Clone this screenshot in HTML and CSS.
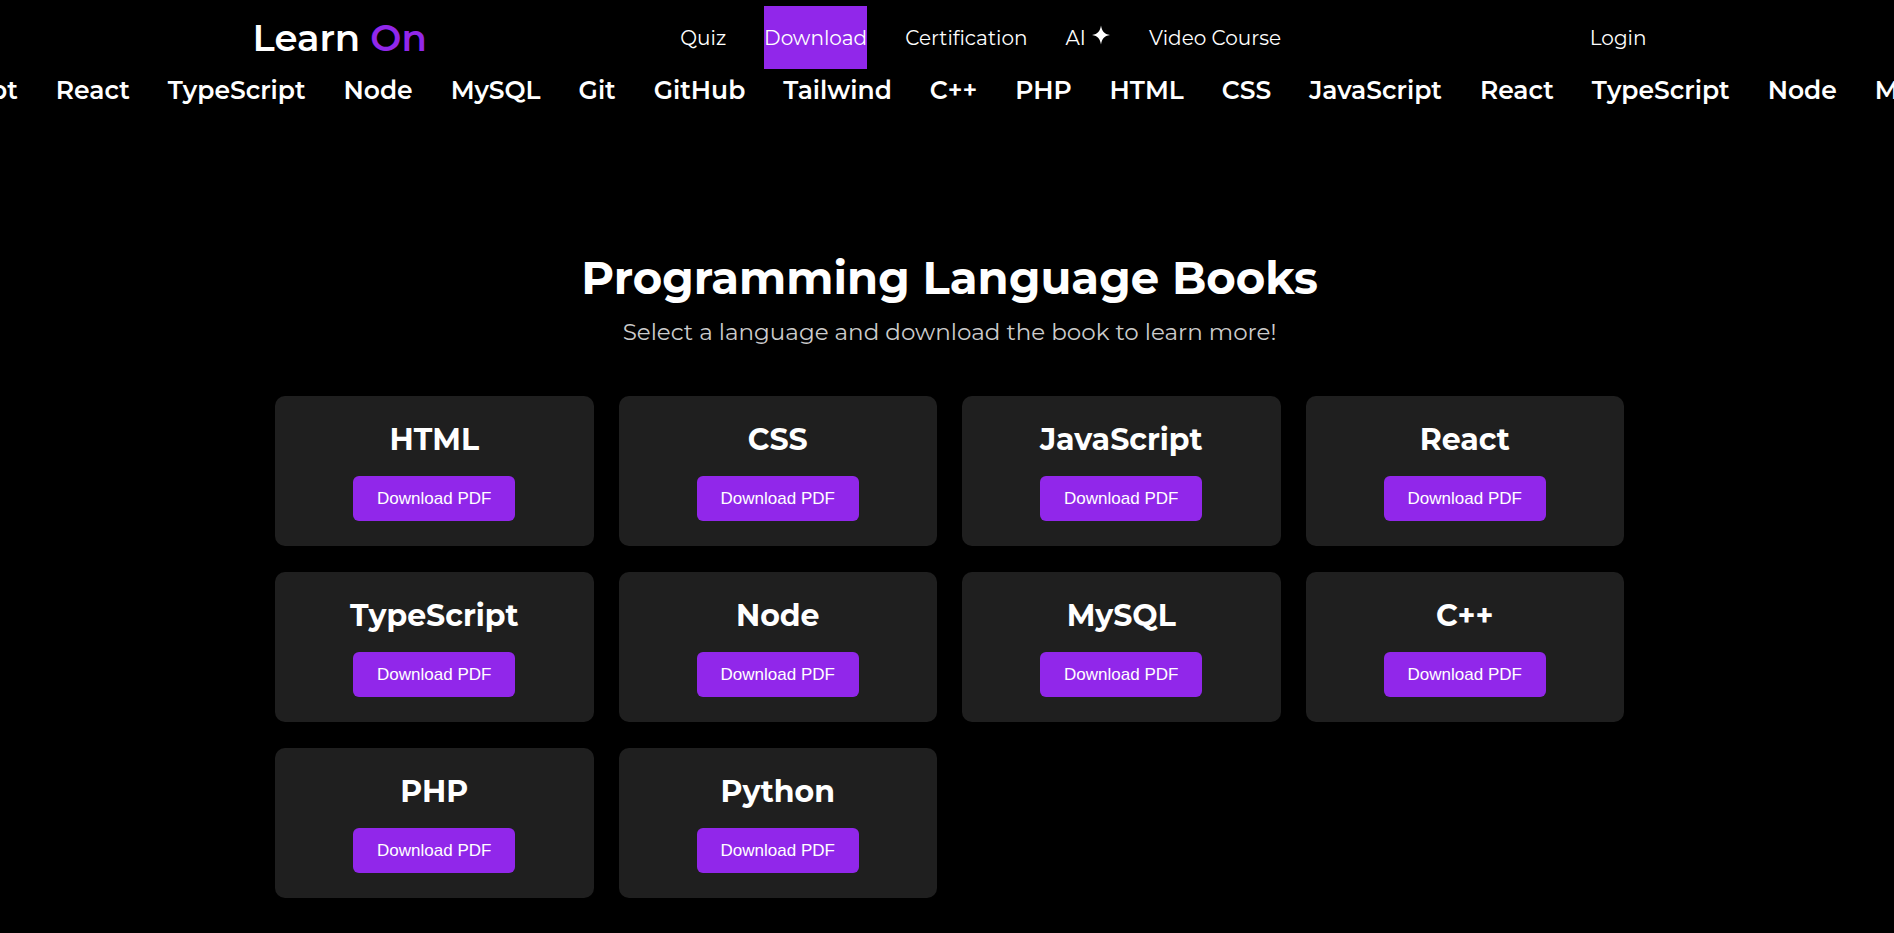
FILE: index.html
```html
<!DOCTYPE html>
<html lang="en">
<head>
<meta charset="utf-8">
<meta name="viewport" content="width=device-width, initial-scale=1">
<title>Learn On</title>
<link rel="stylesheet" href="styles.css">
</head>
<body>
<header class="header">
  <a class="logo" href="#">Learn <span class="logo-accent">On</span></a>
  <nav class="nav">
    <a class="nav-link" href="#">Quiz</a>
    <a class="nav-link active" href="#">Download</a>
    <a class="nav-link" href="#">Certification</a>
    <a class="nav-link" href="#">AI <svg class="star" viewBox="0 0 20 20" aria-hidden="true"><path d="M10 0.5C11 6.2 13 9 19 10C13 11 11 13.8 10 19.5C9 13.8 7 11 1 10C7 9 9 6.2 10 0.5Z"/></svg></a>
    <a class="nav-link" href="#">Video Course</a>
  </nav>
  <div class="account"><a class="nav-link" href="#">Login</a></div>
</header>
<div class="ticker">
  <ul class="ticker-track">
    <li>JavaScript</li><li>React</li><li>TypeScript</li><li>Node</li><li>MySQL</li><li>Git</li><li>GitHub</li><li>Tailwind</li><li>C++</li><li>PHP</li><li>HTML</li><li>CSS</li><li>JavaScript</li><li>React</li><li>TypeScript</li><li>Node</li><li>MySQL</li>
  </ul>
</div>
<main class="books">
  <h1 class="title">Programming Language Books</h1>
  <p class="subtitle">Select a language and download the book to learn more!</p>
  <div class="grid">
    <article class="card"><h2 class="card-title">HTML</h2><button class="btn" type="button">Download PDF</button></article>
    <article class="card"><h2 class="card-title">CSS</h2><button class="btn" type="button">Download PDF</button></article>
    <article class="card"><h2 class="card-title">JavaScript</h2><button class="btn" type="button">Download PDF</button></article>
    <article class="card"><h2 class="card-title">React</h2><button class="btn" type="button">Download PDF</button></article>
    <article class="card"><h2 class="card-title">TypeScript</h2><button class="btn" type="button">Download PDF</button></article>
    <article class="card"><h2 class="card-title">Node</h2><button class="btn" type="button">Download PDF</button></article>
    <article class="card"><h2 class="card-title">MySQL</h2><button class="btn" type="button">Download PDF</button></article>
    <article class="card"><h2 class="card-title">C++</h2><button class="btn" type="button">Download PDF</button></article>
    <article class="card"><h2 class="card-title">PHP</h2><button class="btn" type="button">Download PDF</button></article>
    <article class="card"><h2 class="card-title">Python</h2><button class="btn" type="button">Download PDF</button></article>
  </div>
</main>
</body>
</html>
```
FILE: styles.css
```css
* {
  box-sizing: border-box;
  margin: 0;
  padding: 0;
}

body {
  padding-left: 5px;
  background: #000;
  color: #fff;
  font-family: Montserrat, Inter, sans-serif;
  overflow-x: hidden;
}

.header {
  display: flex;
  align-items: center;
  justify-content: space-between;
  max-width: 1394px;
  margin: 0 auto;
  padding-top: 6px;
}

.logo {
  color: #fff;
  font-size: 37px;
  font-weight: 600;
  text-decoration: none;
}

.logo-accent {
  color: #9127ea;
}

.nav {
  display: flex;
  gap: 38px;
}

.nav-link {
  padding-top: 2px;
  color: #fff;
  font-size: 20px;
  line-height: 61px;
  text-decoration: none;
  white-space: nowrap;
}

.nav-link.active {
  background: #9127ea;
}

.star {
  width: 20px;
  height: 20px;
  fill: #fff;
}

.account {
  display: flex;
  justify-content: flex-end;
  min-width: 112px;
}

.ticker {
  margin-left: -5px;
  overflow: hidden;
}

.ticker-track {
  display: flex;
  gap: 38px;
  margin-left: -115px;
  list-style: none;
  font-size: 25px;
  font-weight: 600;
  line-height: 42px;
  white-space: nowrap;
}

.books {
  max-width: 1349px;
  margin: 0 auto;
  padding: 138px 0 36px;
  text-align: center;
}

.title {
  font-size: 45px;
  font-weight: 700;
  line-height: 58px;
}

.subtitle {
  margin-top: 8px;
  color: #ccc;
  font-size: 23px;
  font-weight: 400;
  line-height: 34px;
}

.grid {
  display: grid;
  grid-template-columns: repeat(4, 1fr);
  gap: 26px 25px;
  margin-top: 47px;
}

.card {
  padding: 25px;
  border-radius: 10px;
  background: #1f1f1f;
}

.card-title {
  margin-bottom: 18px;
  font-size: 30px;
  font-weight: 700;
  line-height: 37px;
}

.btn {
  padding: 0 24px;
  border: 0;
  border-radius: 6px;
  background: #9127ea;
  color: #fff;
  font: 17px/45px "Liberation Sans", Arial, sans-serif;
  cursor: pointer;
}
```
